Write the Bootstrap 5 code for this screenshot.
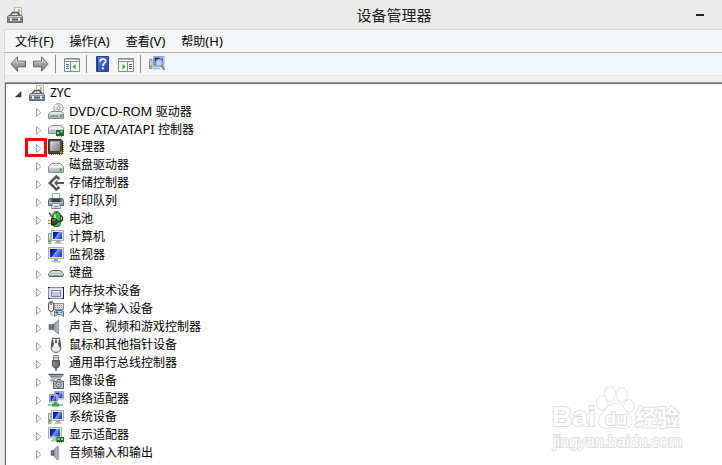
<!DOCTYPE html>
<html lang="zh-CN">
<head>
<meta charset="utf-8">
<meta name="viewport" content="width=device-width, initial-scale=1">
<title>设备管理器</title>
<link href="https://cdn.jsdelivr.net/npm/bootstrap@5.3.0/dist/css/bootstrap.min.css" rel="stylesheet">
<style>
  html, body { height: 100%; }
  body {
    background: #ebebeb;
    color: #000;
    font-family: "Noto Sans", "Noto Sans CJK SC", sans-serif;
    font-size: 12px;
    line-height: 18px;
  }
  button { color: inherit; }
  .latin { font-size: 13px; }
  .ico { width: 16px; height: 16px; flex: none; display: block; }

  .title-bar { height: 29px; padding-left: 7px; padding-right: 4px; }
  .title-text { font-size: 15px; line-height: 28px; color: #222; padding-left: 83px; }
  .minimise { width: 36px; height: 26px; }
  .minimise span { display: block; width: 8px; height: 2px; background: #222; margin: 0 auto; }

  .frame { margin-left: 4px; border-left: 1px solid #d8d8d8; border-top: 1px solid #d8d8d8; background: #f0f0f0; }
  .menu-bar { background: #f5f6f7; border-bottom: 1px solid #b0b0b0; padding-left: 2px; }
  .menu-bar button { padding: 2px 8px; line-height: 18px; height: 22px; }
  .tool-bar { background: #f5f6f7; border-bottom: 1px solid #e6e6e6; height: 23px; padding: 2px 5px; margin-bottom: 6px; }
  .tool-group { gap: 7px; }
  .tool-rule { width: 1px; height: 18px; background: #8c8c8c; margin-left: 6px; margin-right: 8px; }

  .tree-pane { background: #fff; border-top: 1px solid #a0a0a0; box-shadow: inset 1px 1px 0 #696969; padding: 1px 0 0 1px; overflow: hidden; }
  .tree-row { height: 18px; }
  .tree-root { padding-left: 8px; }
  .tree-child { padding-left: 29px; }
  .toggle { width: 8px; height: 18px; }
  .toggle svg { display: block; width: 8px; height: 18px; }
  .tree-child .toggle { margin-right: 5px; }
  .tree-root .toggle { margin-right: 7px; }
  .tree-row .ico { margin-right: 5px; }
  .callout { left: -10px; top: 0; width: 22px; height: 19px; border: 3px solid #f00; pointer-events: none; }
  .watermark { right: 36px; bottom: 12px; width: 136px; height: 68px; }
</style>
</head>
<body class="d-flex flex-column overflow-hidden">

<svg width="0" height="0" class="position-absolute" aria-hidden="true">
  <defs>
    <linearGradient id="g-metal" x1="0" y1="0" x2="0" y2="1"><stop offset="0" stop-color="#f4f5f5"/><stop offset="1" stop-color="#a9aeb1"/></linearGradient>
    <linearGradient id="g-arrow" x1="0" y1="0" x2="0" y2="1"><stop offset="0" stop-color="#c6c6c6"/><stop offset="1" stop-color="#7a7a7a"/></linearGradient>
    <linearGradient id="g-screen" x1="0" y1="0" x2="1" y2=".5"><stop offset="0" stop-color="#04128a"/><stop offset=".5" stop-color="#1633d2"/><stop offset=".55" stop-color="#7d9df5"/><stop offset="1" stop-color="#2a48d8"/></linearGradient>
    <linearGradient id="g-help" x1="0" y1="0" x2="1" y2="1"><stop offset="0" stop-color="#5c86e6"/><stop offset="1" stop-color="#1f3fa8"/></linearGradient>
    <linearGradient id="g-speaker" x1="0" y1="0" x2="1" y2="0"><stop offset="0" stop-color="#596169"/><stop offset="1" stop-color="#bfc5c9"/></linearGradient>
    <linearGradient id="g-chip" x1="0" y1="0" x2="1" y2="1"><stop offset="0" stop-color="#d5d5d5"/><stop offset="1" stop-color="#7c7c7c"/></linearGradient>
  </defs>

  <symbol id="i-case" viewBox="0 0 16 16">
    <path d="M7.500.5h7V10h-7z" fill="#f6f7f6" stroke="#b3b7b7"/><path d="M11 2h2v4h-2z" fill="#7fce68"/><path d="M9.500 7.500h4" stroke="#bfc5c5"/>
    <path d="M3.500 9V8l2-2.500h5L12.500 8v1" fill="none" stroke="#49545b" stroke-width="1.500"/>
    <path d="M1.500 8.500h13l1 1.500v5.500H.5V10z" fill="#8c9ca7" stroke="#5e6d77"/><path d="M1.500 9.500h13" stroke="#c9d4db"/><path d="M1 12.500h14" stroke="#52616b"/><path d="M3 11h2v3H3zM11 11h2v3h-2z" fill="#e2e8eb"/><path d="M1 14.500h14" stroke="#6f818d"/>
  </symbol>
  <symbol id="i-dvd" viewBox="0 0 16 16">
    <circle cx="10.500" cy="5.200" r="4.700" fill="#dfe3e1" stroke="#979d9c"/><path d="M10.500 5.200 7 2.200M10.500 5.200l3.600-2.700" stroke="#fff" stroke-width="1.600"/><path d="M11 2v2" stroke="#63bd57"/><circle cx="10.500" cy="5.200" r="1.500" fill="#fff" stroke="#8d9190"/>
    <path d="M3 8.500h10.500l2 2.500v4q0 .500-.500.500H1q-.500 0-.500-.500v-4z" fill="url(#g-metal)" stroke="#80868a"/><path d="M2 13h8" stroke="#555b5f"/><path d="M12 11.500h2.500V14H12z" fill="#35b834"/>
  </symbol>
  <symbol id="i-ide" viewBox="0 0 16 16">
    <path d="M3 4.500h10.500l2 2.500v5q0 .500-.500.500H1q-.500 0-.500-.500V7z" fill="url(#g-metal)" stroke="#8b9091"/><path d="M1 7.500h14" stroke="#fff"/>
    <path d="M8 9h8v6H8z" fill="#176a3b"/><path d="M9 11h2v2H9zM12.500 9.500h2v2h-2z" fill="#8fda72"/><path d="M9 15.500h6" stroke="#d1b33c" stroke-dasharray="1 1"/>
  </symbol>
  <symbol id="i-cpu" viewBox="0 0 16 16">
    <path d="M15.300 2v13M1 15.300h14" stroke="#b8913c" stroke-width="1.400" stroke-dasharray="1 1"/>
    <path d="M.5.5h12.500l1.500 1.500v12.500H.5z" fill="#4a4a4a" stroke="#333"/><path d="M2.500 2.500h9.500v9.500H2.500z" fill="url(#g-chip)"/><path d="M3 12V3h9" fill="none" stroke="#eee" stroke-width=".600"/><path d="M12 12.500h2.500v2H12z" fill="#c9922a"/>
  </symbol>
  <symbol id="i-disk" viewBox="0 0 16 16">
    <path d="M3.500 6.500h9l3 3V15q0 .500-.500.500H1q-.500 0-.500-.500V9.500z" fill="url(#g-metal)" stroke="#8a9092"/><path d="M1 10h14" stroke="#fff"/><path d="M11.500 11.500H14v3h-2.500z" fill="#37c033"/>
  </symbol>
  <symbol id="i-storage" viewBox="0 0 16 16">
    <path d="M11.500 4 8.300 1.500 1.800 8l6.500 6.500 3.200-2.500" fill="none" stroke="#5b5b5b" stroke-width="2.600"/><path d="M9.500 4.500 6 8l3.500 3.500V9H16V7H9.500z" fill="#5b5b5b"/>
  </symbol>
  <symbol id="i-printer" viewBox="0 0 16 16">
    <path d="M4.500.5h7V7h-7z" fill="#f7f7f7" stroke="#a5a9ab"/><path d="M1.500 5.500h13l1 2v5H.5v-5z" fill="#8a9095" stroke="#5d6367"/><path d="M3.500 6h9v3h-9z" fill="#394047"/><path d="M1 10h14" stroke="#d6dadc"/>
    <path d="M4.500 10.500h7l1 5h-9z" fill="#fff" stroke="#7f8689"/><path d="M5.500 13.500h5" stroke="#64a4da" stroke-width="2"/><path d="M14 8h1.500v1H14z" fill="#4ac24a"/>
  </symbol>
  <symbol id="i-battery" viewBox="0 0 16 16">
    <path d="M6.500.5h4V2h-4z" fill="#c9cfca" stroke="#767f78"/><rect x="4.500" y="1.500" width="8" height="14" rx="3" fill="#41b83d" stroke="#2a6b2e"/><path d="M7 3.500v5" stroke="#d9f7cf" stroke-width="1.600"/>
    <path d="M1 1.500 4 6" stroke="#555" stroke-width="1.400"/><path d="M0 9.500h4M0 12.500h4" stroke="#cc8b2b" stroke-width="1.500"/><path d="M3.500 7.500h2.500q3 .500 3.500 3-.500 3-3.500 3.500H3.500z" fill="#3c453e" stroke="#1a201b"/><path d="M4.500 9h3" stroke="#a2aaa3"/><path d="M9.500 10.500h1.500q4 0 3.500-4-.500-2-2.500-2" fill="none" stroke="#30382f" stroke-width="1.500"/>
  </symbol>
  <symbol id="i-computer" viewBox="0 0 16 16">
    <path d="M.5 4.500h2.500v10H.5z" fill="#d9dedc" stroke="#909799"/><path d="M1 10.500h1.500v2.500H1z" fill="#33b633"/>
    <path d="M3.500 1.500h12v10h-12z" fill="#e5e7e3" stroke="#a9ada8"/><path d="M5 3h9v7H5z" fill="url(#g-screen)"/><path d="M8 12h4v1.500H8z" fill="#9ea6ad"/><path d="M6.500 14h7" stroke="#a9b0b4" stroke-width="1.400"/>
  </symbol>
  <symbol id="i-monitor" viewBox="0 0 16 16">
    <path d="M.5.5h15v11H.5z" fill="#e4e5dc" stroke="#aaaea9"/><path d="M2 2h12v8H2z" fill="url(#g-screen)"/><path d="M6 12h4v2H6z" fill="#8fa2b9"/><path d="M3.500 14.500h9" stroke="#a8b4c0" stroke-width="1.600"/>
  </symbol>
  <symbol id="i-keyboard" viewBox="0 0 16 16">
    <path d="M3.500 5.500h9l3 3.500v1.500l-1 1h-13l-1-1V9z" fill="#e1e3e4" stroke="#686d70"/><path d="M3.500 7h9M2.500 8.600h11.500" stroke="#999" stroke-dasharray="1 1"/><path d="M1 11h14" stroke="#4f5457"/>
  </symbol>
  <symbol id="i-memory" viewBox="0 0 16 16">
    <path d="M.5 4.500h15v11H.5z" fill="#dcdfed" stroke="#8b8fa6"/><path d="M0 4.500h2M14 4.500h2M15.500 4v12M0 15.500h2M14 15.500h2" stroke="#20222e"/><path d="M3.500 7.500h9v6h-9z" fill="#c3c8e0" stroke="#7b81a3"/><path d="M4 8.500h8" stroke="#eef0f8"/>
  </symbol>
  <symbol id="i-hid" viewBox="0 0 16 16">
    <path d="M6 2.500h9.500v6H6z" fill="#d8dadb" stroke="#85898c"/><path d="M7 4.500h8M7 6.500h8" stroke="#888" stroke-dasharray="1 1"/>
    <rect x=".6" y=".6" width="5" height="10" rx="2.500" fill="#e8e8e8" stroke="#4a4a4a"/><path d="M3 1v3" stroke="#333"/>
    <path d="M6.500 15.500V11q0-1.500 1.500-1.500h6q1.500 0 1.500 1.500v4.500l-3-2H9.500z" fill="#c5d6e5" stroke="#5f7180"/><path d="M7.500 11.500h3M9 10v3" stroke="#334f6e"/><circle cx="13.200" cy="11.500" r="1" fill="#338cd8"/><path d="M3 10.500v3.500h2" fill="none" stroke="#888"/>
  </symbol>
  <symbol id="i-speaker" viewBox="0 0 16 16">
    <path d="M1 5.500h4L10.500.8v14.400L5 10.500H1z" fill="url(#g-speaker)" stroke="#747c82" stroke-width=".700"/><path d="M5 5.500v5" stroke="#424a51"/>
  </symbol>
  <symbol id="i-mouse" viewBox="0 0 16 16">
    <path d="M4.500.8Q8 2.400 11.500.8L12.500 8q1.500 7.200-4.500 7.400Q2 15.200 3.500 8z" fill="#f1f1f0" stroke="#55595c"/><path d="M4.500 1 3.500 8l1 3L6 7zM11.500 1l1 7-1 3L10 7z" fill="#4f5356"/><path d="M8 2.500v3.500" stroke="#3c3c3c" stroke-width="1.600"/>
  </symbol>
  <symbol id="i-usb" viewBox="0 0 16 16">
    <path d="M5.500.5h5v5h-5z" fill="#dddfe0" stroke="#85898b"/><path d="M7 2v1.500M9 2v1.500" stroke="#555"/><path d="M4.500 5.500h7v5L9.500 13h-3l-2-2.500z" fill="#6c7073" stroke="#4b4e51"/><path d="M6 6.500v4" stroke="#a9adaf"/><path d="M8 13v3" stroke="#555" stroke-width="1.500"/>
  </symbol>
  <symbol id="i-imaging" viewBox="0 0 16 16">
    <path d="M0 1h15.500v2L12 6H4z" fill="#aeb4b7"/><path d="M.5 1.500h15" stroke="#59636a" stroke-width="1.500"/><path d="M2 3.500h12" stroke="#7c858b"/>
    <path d="M5.500 8.500h3l1-2h3l1 2h2v7h-10z" fill="#b3b9bc" stroke="#5b6267"/><path d="M1 6.500h6v2H3z" fill="#8b949a"/><circle cx="10.500" cy="11.500" r="2.600" fill="#eceff0" stroke="#43494e"/><circle cx="10.500" cy="11.500" r="1.100" fill="#40729b"/>
  </symbol>
  <symbol id="i-network" viewBox="0 0 16 16">
    <path d="M6.500.5h9v7.500h-9z" fill="#eceee9" stroke="#9ba1a3"/><path d="M7.500 1.500h7V7h-7z" fill="url(#g-screen)"/><path d="M1.500 3.500h8V11h-8z" fill="#eceee9" stroke="#9ba1a3"/><path d="M2.500 4.500h6V10h-6z" fill="url(#g-screen)"/>
    <path d="M7.500 11v2" stroke="#31a33d" stroke-width="2.500"/><path d="M0 14h15" stroke="#9fc7a8" stroke-width="2"/><path d="M4 12.500h7v3H4z" fill="#35a846"/>
  </symbol>
  <symbol id="i-display" viewBox="0 0 16 16">
    <path d="M.5.500h13v10.500H.5z" fill="#e5e7e3" stroke="#a9ada8"/><path d="M2 2h10v7.500H2z" fill="url(#g-screen)"/><path d="M5 11.500h4v1.500H5zM3 13h6v1.500H3z" fill="#b3bac0"/>
    <path d="M8.500 10H16v5H8.500z" fill="#176a3b"/><path d="M9.500 11h2v2h-2zM13 11h2v2h-2z" fill="#8fda72"/><path d="M9 15.500h6" stroke="#d1b33c" stroke-dasharray="1 1"/>
  </symbol>
  <symbol id="i-audio" viewBox="0 0 16 16">
    <path d="M3 5.500h2.500L9.500 1v14l-4-4.500H3z" fill="url(#g-speaker)" stroke="#767e83" stroke-width=".700"/><path d="M5.500 5.500v5" stroke="#4a5157"/><path d="M10.500 1v14" stroke="#b1b6b9" stroke-width="1.500"/>
  </symbol>
  <symbol id="i-back" viewBox="0 0 16 16">
    <path d="M.8 8 7.500.8v4.400h8v5.600h-8v4.400z" fill="url(#g-arrow)" stroke="#676767" stroke-linejoin="round"/><path d="m2.500 7.500 4-4.300v3h8" fill="none" stroke="#d9d9d9" stroke-width=".800"/>
  </symbol>
  <symbol id="i-forward" viewBox="0 0 16 16">
    <path d="M15.200 8 8.500.8v4.400h-8v5.600h8v4.400z" fill="url(#g-arrow)" stroke="#676767" stroke-linejoin="round"/><path d="m13.500 7.500-4-4.300v3h-8" fill="none" stroke="#d9d9d9" stroke-width=".800"/>
  </symbol>
  <symbol id="i-pane-left" viewBox="0 0 16 16">
    <path d="M.5 2.500h15v13H.5z" fill="#fbfbfb" stroke="#888d93"/><path d="M1 3.500h10" stroke="#b9c0c8"/><path d="M11.500 3.500h3" stroke="#555" stroke-dasharray="1 1"/><path d="M1 5.500h14" stroke="#8a9097"/><path d="M7 6h8v9H7z" fill="#eef3ec"/><path d="M6.500 6v9" stroke="#8a9097"/><path d="M2 8.500h3M2 10.500h3M2 12.500h3" stroke="#4c78b4"/><path d="M11.500 8v5.500L8.500 10.700z" fill="#38a926"/>
  </symbol>
  <symbol id="i-pane-right" viewBox="0 0 16 16">
    <path d="M.5 2.500h15v13H.5z" fill="#fbfbfb" stroke="#888d93"/><path d="M1 3.500h10" stroke="#b9c0c8"/><path d="M11.500 3.500h3" stroke="#555" stroke-dasharray="1 1"/><path d="M1 5.500h14" stroke="#8a9097"/><path d="M1 6h8v9H1z" fill="#eef3ec"/><path d="M9.500 6v9" stroke="#8a9097"/><path d="M11 8.500h3M11 10.500h3M11 12.500h3" stroke="#4c78b4"/><path d="M4.500 8v5.500l3-2.800z" fill="#38a926"/>
  </symbol>
  <symbol id="i-help" viewBox="0 0 16 16">
    <path d="M1.500.5h12v15h-12z" fill="url(#g-help)" stroke="#2a4499"/><path d="M2.500 1v14" stroke="#1f378d"/><path d="M5.200 5.500q0-2.500 2.700-2.500t2.700 2.300q0 1.200-1.400 2.200T7.900 10" fill="none" stroke="#fff" stroke-width="1.700"/><path d="M7 11.300h1.800v1.900H7z" fill="#fff"/>
  </symbol>
  <symbol id="i-scan" viewBox="0 0 16 16">
    <path d="M.5 3.500h2.500v9H.5z" fill="#d9dedc" stroke="#858b8d"/><path d="M1 9.500h1.500v2H1z" fill="#5b5"/><path d="M4.500.5h10.500v10H4.500z" fill="#e5e7e3" stroke="#a0a49f"/><path d="M5.500 1.500h8.500v8H5.500z" fill="url(#g-screen)"/><path d="M4 12.500h7" stroke="#a9b0b4" stroke-width="1.500"/>
    <circle cx="10" cy="7" r="3.300" fill="#c5e0fa" fill-opacity=".850" stroke="#8aa5c2" stroke-width="1.200"/><path d="m12.300 9.800 3.200 4" stroke="#7b858e" stroke-width="2"/>
  </symbol>
  <symbol id="i-closed" viewBox="0 0 8 18"><path d="M1.500 6.500v8L5.800 10.500z" fill="#fff" stroke="#a0a0a0"/></symbol>
  <symbol id="i-open" viewBox="0 0 8 18"><path d="M7 7.500v5.500H1.500z" fill="#404040" stroke="#222" stroke-width=".500"/></symbol>
</svg>

<header class="title-bar d-flex align-items-center">
  <svg class="ico" aria-hidden="true"><use href="#i-case"/></svg>
  <h1 class="title-text flex-fill text-center fw-normal m-0">设备管理器</h1>
  <button type="button" class="minimise border-0 bg-transparent p-0" aria-label="最小化"><span></span></button>
</header>

<main class="frame flex-fill d-flex flex-column overflow-hidden">
  <nav class="menu-bar d-flex" aria-label="菜单">
    <button type="button" class="border-0 bg-transparent">文件<span class="latin">(F)</span></button>
    <button type="button" class="border-0 bg-transparent">操作<span class="latin">(A)</span></button>
    <button type="button" class="border-0 bg-transparent">查看<span class="latin">(V)</span></button>
    <button type="button" class="border-0 bg-transparent">帮助<span class="latin">(H)</span></button>
  </nav>
  <div class="tool-bar d-flex align-items-center flex-shrink-0" role="toolbar" aria-label="工具栏">
    <div class="tool-group d-flex">
      <button type="button" class="border-0 bg-transparent p-0" aria-label="后退"><svg class="ico"><use href="#i-back"/></svg></button>
      <button type="button" class="border-0 bg-transparent p-0" aria-label="前进"><svg class="ico"><use href="#i-forward"/></svg></button>
    </div>
    <span class="tool-rule"></span>
    <button type="button" class="border-0 bg-transparent p-0" aria-label="显示控制台树"><svg class="ico"><use href="#i-pane-left"/></svg></button>
    <span class="tool-rule"></span>
    <div class="tool-group d-flex">
      <button type="button" class="border-0 bg-transparent p-0" aria-label="帮助"><svg class="ico"><use href="#i-help"/></svg></button>
      <button type="button" class="border-0 bg-transparent p-0" aria-label="显示操作窗格"><svg class="ico"><use href="#i-pane-right"/></svg></button>
    </div>
    <span class="tool-rule"></span>
    <button type="button" class="border-0 bg-transparent p-0" aria-label="扫描检测硬件改动"><svg class="ico"><use href="#i-scan"/></svg></button>
  </div>

  <section class="tree-pane flex-fill" aria-label="设备">
    <ul class="list-unstyled m-0">
      <li>
        <div class="tree-row tree-root d-flex align-items-center"><button type="button" class="toggle border-0 bg-transparent p-0" aria-label="折叠" aria-expanded="true"><svg><use href="#i-open"/></svg></button><svg class="ico"><use href="#i-case"/></svg><span>ZYC</span></div>
        <ul class="list-unstyled m-0">
          <li class="tree-row tree-child d-flex align-items-center"><button type="button" class="toggle border-0 bg-transparent p-0" aria-label="展开"><svg><use href="#i-closed"/></svg></button><svg class="ico"><use href="#i-dvd"/></svg><span><span class="latin">DVD/CD-ROM </span>驱动器</span></li>
          <li class="tree-row tree-child d-flex align-items-center"><button type="button" class="toggle border-0 bg-transparent p-0" aria-label="展开"><svg><use href="#i-closed"/></svg></button><svg class="ico"><use href="#i-ide"/></svg><span><span class="latin">IDE ATA/ATAPI </span>控制器</span></li>
          <li class="tree-row tree-child d-flex align-items-center"><button type="button" class="toggle position-relative border-0 bg-transparent p-0" aria-label="展开"><svg><use href="#i-closed"/></svg><span class="callout position-absolute"></span></button><svg class="ico"><use href="#i-cpu"/></svg><span>处理器</span></li>
          <li class="tree-row tree-child d-flex align-items-center"><button type="button" class="toggle border-0 bg-transparent p-0" aria-label="展开"><svg><use href="#i-closed"/></svg></button><svg class="ico"><use href="#i-disk"/></svg><span>磁盘驱动器</span></li>
          <li class="tree-row tree-child d-flex align-items-center"><button type="button" class="toggle border-0 bg-transparent p-0" aria-label="展开"><svg><use href="#i-closed"/></svg></button><svg class="ico"><use href="#i-storage"/></svg><span>存储控制器</span></li>
          <li class="tree-row tree-child d-flex align-items-center"><button type="button" class="toggle border-0 bg-transparent p-0" aria-label="展开"><svg><use href="#i-closed"/></svg></button><svg class="ico"><use href="#i-printer"/></svg><span>打印队列</span></li>
          <li class="tree-row tree-child d-flex align-items-center"><button type="button" class="toggle border-0 bg-transparent p-0" aria-label="展开"><svg><use href="#i-closed"/></svg></button><svg class="ico"><use href="#i-battery"/></svg><span>电池</span></li>
          <li class="tree-row tree-child d-flex align-items-center"><button type="button" class="toggle border-0 bg-transparent p-0" aria-label="展开"><svg><use href="#i-closed"/></svg></button><svg class="ico"><use href="#i-computer"/></svg><span>计算机</span></li>
          <li class="tree-row tree-child d-flex align-items-center"><button type="button" class="toggle border-0 bg-transparent p-0" aria-label="展开"><svg><use href="#i-closed"/></svg></button><svg class="ico"><use href="#i-monitor"/></svg><span>监视器</span></li>
          <li class="tree-row tree-child d-flex align-items-center"><button type="button" class="toggle border-0 bg-transparent p-0" aria-label="展开"><svg><use href="#i-closed"/></svg></button><svg class="ico"><use href="#i-keyboard"/></svg><span>键盘</span></li>
          <li class="tree-row tree-child d-flex align-items-center"><button type="button" class="toggle border-0 bg-transparent p-0" aria-label="展开"><svg><use href="#i-closed"/></svg></button><svg class="ico"><use href="#i-memory"/></svg><span>内存技术设备</span></li>
          <li class="tree-row tree-child d-flex align-items-center"><button type="button" class="toggle border-0 bg-transparent p-0" aria-label="展开"><svg><use href="#i-closed"/></svg></button><svg class="ico"><use href="#i-hid"/></svg><span>人体学输入设备</span></li>
          <li class="tree-row tree-child d-flex align-items-center"><button type="button" class="toggle border-0 bg-transparent p-0" aria-label="展开"><svg><use href="#i-closed"/></svg></button><svg class="ico"><use href="#i-speaker"/></svg><span>声音、视频和游戏控制器</span></li>
          <li class="tree-row tree-child d-flex align-items-center"><button type="button" class="toggle border-0 bg-transparent p-0" aria-label="展开"><svg><use href="#i-closed"/></svg></button><svg class="ico"><use href="#i-mouse"/></svg><span>鼠标和其他指针设备</span></li>
          <li class="tree-row tree-child d-flex align-items-center"><button type="button" class="toggle border-0 bg-transparent p-0" aria-label="展开"><svg><use href="#i-closed"/></svg></button><svg class="ico"><use href="#i-usb"/></svg><span>通用串行总线控制器</span></li>
          <li class="tree-row tree-child d-flex align-items-center"><button type="button" class="toggle border-0 bg-transparent p-0" aria-label="展开"><svg><use href="#i-closed"/></svg></button><svg class="ico"><use href="#i-imaging"/></svg><span>图像设备</span></li>
          <li class="tree-row tree-child d-flex align-items-center"><button type="button" class="toggle border-0 bg-transparent p-0" aria-label="展开"><svg><use href="#i-closed"/></svg></button><svg class="ico"><use href="#i-network"/></svg><span>网络适配器</span></li>
          <li class="tree-row tree-child d-flex align-items-center"><button type="button" class="toggle border-0 bg-transparent p-0" aria-label="展开"><svg><use href="#i-closed"/></svg></button><svg class="ico"><use href="#i-computer"/></svg><span>系统设备</span></li>
          <li class="tree-row tree-child d-flex align-items-center"><button type="button" class="toggle border-0 bg-transparent p-0" aria-label="展开"><svg><use href="#i-closed"/></svg></button><svg class="ico"><use href="#i-display"/></svg><span>显示适配器</span></li>
          <li class="tree-row tree-child d-flex align-items-center"><button type="button" class="toggle border-0 bg-transparent p-0" aria-label="展开"><svg><use href="#i-closed"/></svg></button><svg class="ico"><use href="#i-audio"/></svg><span>音频输入和输出</span></li>
        </ul>
      </li>
    </ul>
  </section>
</main>

<svg class="watermark position-absolute" viewBox="0 0 136 68" role="img" aria-label="Baidu 经验" fill="#fff" stroke="#dedede" stroke-width="2" paint-order="stroke" stroke-linejoin="round">
  <text x="2" y="41" font-family="Liberation Sans, sans-serif" font-weight="700" font-size="28">Bai</text>
  <g stroke-width="1.500">
    <ellipse cx="52" cy="18" rx="5" ry="7"/><ellipse cx="60" cy="9" rx="5" ry="7"/><ellipse cx="72" cy="10" rx="5" ry="7"/><ellipse cx="79" cy="21" rx="5" ry="6"/>
    <path d="M66 19c8 0 9 7 13 11 5 5 3 13-5 13-4 0-5-1-9-1s-5 1-9 1c-8 0-9-9-4-14 4-4 6-10 14-10z"/>
  </g>
  <text x="55" y="40" font-family="Liberation Sans, sans-serif" font-weight="700" font-size="18">du</text>
  <text x="85" y="40" font-family="Noto Sans CJK SC, sans-serif" font-weight="700" font-size="22">经验</text>
  <text x="3" y="62" font-family="Liberation Sans, sans-serif" font-size="16">jingyan.baidu.com</text>
</svg>

<script src="https://cdn.jsdelivr.net/npm/bootstrap@5.3.0/dist/js/bootstrap.bundle.min.js"></script>
</body>
</html>
